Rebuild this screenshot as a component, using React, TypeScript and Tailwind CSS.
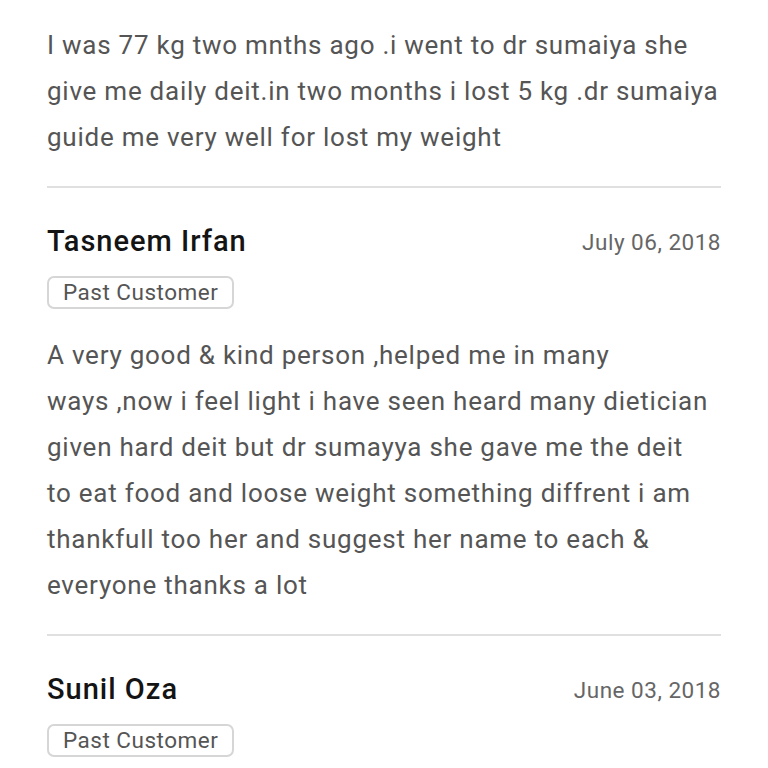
import React from "react";

const reviews = [
  {
    name: "Anonymous",
    date: "July 10, 2018",
    lines: [
      "I was 77 kg two mnths ago .i went to dr sumaiya she",
      "give me daily deit.in two months i lost 5 kg .dr sumaiya",
      "guide me very well for lost my weight",
    ],
  },
  {
    name: "Tasneem Irfan",
    date: "July 06, 2018",
    lines: [
      "A very good & kind person ,helped me in many",
      "ways ,now i feel light i have seen heard many dietician",
      "given hard deit but dr sumayya she gave me the deit",
      "to eat food and loose weight something diffrent i am",
      "thankfull too her and suggest her name to each &",
      "everyone thanks a lot",
    ],
  },
  {
    name: "Sunil Oza",
    date: "June 03, 2018",
    lines: ["Very good experience with dr sumayya"],
  },
];

function App() {
  return (
    <div
      className="bg-white w-[768px] h-[768px] overflow-hidden"
      style={{ fontFamily: "Roboto, 'Noto Sans', sans-serif" }}
    >
      <div className="mt-[-122px] px-[47px]">
        {reviews.map((r, i) => (
          <div
            key={r.name}
            className={i > 0 ? "border-t-2 border-[#e0e0e0]" : ""}
          >
            <div className="pt-[35px] pb-[26px]">
              <div className="flex items-center justify-between h-[36px]">
                <h3 className="text-[29px] font-medium tracking-[1px] text-[#141414] leading-none">
                  {r.name}
                </h3>
                <span className="text-[22.5px] tracking-[0.5px] text-[#666] leading-none mt-[3px]">
                  {r.date}
                </span>
              </div>
              <div className="mt-[17px] flex">
                <span className="h-[33px] px-[14px] flex items-center border-2 border-[#d6d6d6] rounded-[7px] text-[22.5px] tracking-[0.5px] text-[#555] leading-none">
                  Past Customer
                </span>
              </div>
              <p className="mt-[23px] text-[26px] tracking-[0.75px] leading-[46px] text-[#555] whitespace-nowrap">
                {r.lines.map((l) => (
                  <span key={l} className="block">
                    {l}
                  </span>
                ))}
              </p>
            </div>
          </div>
        ))}
      </div>
    </div>
  );
}

export default App;
